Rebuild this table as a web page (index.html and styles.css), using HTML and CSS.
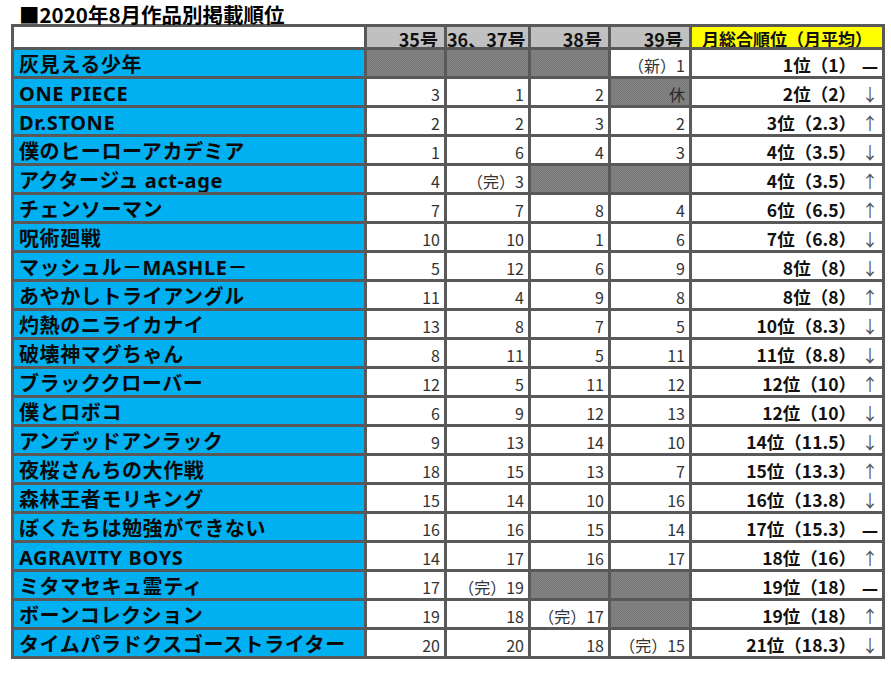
FILE: index.html
```html
<!DOCTYPE html>
<html lang="ja">
<head>
<meta charset="utf-8">
<title>2020年8月作品別掲載順位</title>
<link rel="stylesheet" href="styles.css">
</head>
<body>
<h1 class="title">■2020年8月作品別掲載順位</h1>
<table class="rank">
  <colgroup>
    <col class="c-name"><col class="c-35"><col class="c-36"><col class="c-38"><col class="c-39"><col class="c-tot">
  </colgroup>
  <thead>
    <tr>
      <th class="h-blank"><div class="h"></div></th>
      <th class="h-issue"><div class="h">35号</div></th>
      <th class="h-issue"><div class="h">36、37号</div></th>
      <th class="h-issue"><div class="h">38号</div></th>
      <th class="h-issue"><div class="h">39号</div></th>
      <th class="h-total"><div class="h">月総合順位（月平均）</div></th>
    </tr>
  </thead>
  <tbody>
    <tr><td class="name"><div class="c">灰見える少年</div></td><td class="na"><div class="c"></div></td><td class="na"><div class="c"></div></td><td class="na"><div class="c"></div></td><td class="num"><div class="c">（新）1</div></td><td class="tot"><div class="c"><span class="r">1位（1）</span><span class="m dash">—</span></div></td></tr>
    <tr><td class="name"><div class="c">ONE PIECE</div></td><td class="num"><div class="c">3</div></td><td class="num"><div class="c">1</div></td><td class="num"><div class="c">2</div></td><td class="na num"><div class="c">休</div></td><td class="tot"><div class="c"><span class="r">2位（2）</span><span class="m">↓</span></div></td></tr>
    <tr><td class="name"><div class="c">Dr.STONE</div></td><td class="num"><div class="c">2</div></td><td class="num"><div class="c">2</div></td><td class="num"><div class="c">3</div></td><td class="num"><div class="c">2</div></td><td class="tot"><div class="c"><span class="r">3位（2.3）</span><span class="m">↑</span></div></td></tr>
    <tr><td class="name"><div class="c">僕のヒーローアカデミア</div></td><td class="num"><div class="c">1</div></td><td class="num"><div class="c">6</div></td><td class="num"><div class="c">4</div></td><td class="num"><div class="c">3</div></td><td class="tot"><div class="c"><span class="r">4位（3.5）</span><span class="m">↓</span></div></td></tr>
    <tr><td class="name"><div class="c">アクタージュ act-age</div></td><td class="num"><div class="c">4</div></td><td class="num"><div class="c">（完）3</div></td><td class="na"><div class="c"></div></td><td class="na"><div class="c"></div></td><td class="tot"><div class="c"><span class="r">4位（3.5）</span><span class="m">↑</span></div></td></tr>
    <tr><td class="name"><div class="c">チェンソーマン</div></td><td class="num"><div class="c">7</div></td><td class="num"><div class="c">7</div></td><td class="num"><div class="c">8</div></td><td class="num"><div class="c">4</div></td><td class="tot"><div class="c"><span class="r">6位（6.5）</span><span class="m">↑</span></div></td></tr>
    <tr><td class="name"><div class="c">呪術廻戦</div></td><td class="num"><div class="c">10</div></td><td class="num"><div class="c">10</div></td><td class="num"><div class="c">1</div></td><td class="num"><div class="c">6</div></td><td class="tot"><div class="c"><span class="r">7位（6.8）</span><span class="m">↓</span></div></td></tr>
    <tr><td class="name"><div class="c">マッシュル－MASHLE－</div></td><td class="num"><div class="c">5</div></td><td class="num"><div class="c">12</div></td><td class="num"><div class="c">6</div></td><td class="num"><div class="c">9</div></td><td class="tot"><div class="c"><span class="r">8位（8）</span><span class="m">↓</span></div></td></tr>
    <tr><td class="name"><div class="c">あやかしトライアングル</div></td><td class="num"><div class="c">11</div></td><td class="num"><div class="c">4</div></td><td class="num"><div class="c">9</div></td><td class="num"><div class="c">8</div></td><td class="tot"><div class="c"><span class="r">8位（8）</span><span class="m">↑</span></div></td></tr>
    <tr><td class="name"><div class="c">灼熱のニライカナイ</div></td><td class="num"><div class="c">13</div></td><td class="num"><div class="c">8</div></td><td class="num"><div class="c">7</div></td><td class="num"><div class="c">5</div></td><td class="tot"><div class="c"><span class="r">10位（8.3）</span><span class="m">↓</span></div></td></tr>
    <tr><td class="name"><div class="c">破壊神マグちゃん</div></td><td class="num"><div class="c">8</div></td><td class="num"><div class="c">11</div></td><td class="num"><div class="c">5</div></td><td class="num"><div class="c">11</div></td><td class="tot"><div class="c"><span class="r">11位（8.8）</span><span class="m">↓</span></div></td></tr>
    <tr><td class="name"><div class="c">ブラッククローバー</div></td><td class="num"><div class="c">12</div></td><td class="num"><div class="c">5</div></td><td class="num"><div class="c">11</div></td><td class="num"><div class="c">12</div></td><td class="tot"><div class="c"><span class="r">12位（10）</span><span class="m">↑</span></div></td></tr>
    <tr><td class="name"><div class="c">僕とロボコ</div></td><td class="num"><div class="c">6</div></td><td class="num"><div class="c">9</div></td><td class="num"><div class="c">12</div></td><td class="num"><div class="c">13</div></td><td class="tot"><div class="c"><span class="r">12位（10）</span><span class="m">↓</span></div></td></tr>
    <tr><td class="name"><div class="c">アンデッドアンラック</div></td><td class="num"><div class="c">9</div></td><td class="num"><div class="c">13</div></td><td class="num"><div class="c">14</div></td><td class="num"><div class="c">10</div></td><td class="tot"><div class="c"><span class="r">14位（11.5）</span><span class="m">↓</span></div></td></tr>
    <tr><td class="name"><div class="c">夜桜さんちの大作戦</div></td><td class="num"><div class="c">18</div></td><td class="num"><div class="c">15</div></td><td class="num"><div class="c">13</div></td><td class="num"><div class="c">7</div></td><td class="tot"><div class="c"><span class="r">15位（13.3）</span><span class="m">↑</span></div></td></tr>
    <tr><td class="name"><div class="c">森林王者モリキング</div></td><td class="num"><div class="c">15</div></td><td class="num"><div class="c">14</div></td><td class="num"><div class="c">10</div></td><td class="num"><div class="c">16</div></td><td class="tot"><div class="c"><span class="r">16位（13.8）</span><span class="m">↓</span></div></td></tr>
    <tr><td class="name"><div class="c">ぼくたちは勉強ができない</div></td><td class="num"><div class="c">16</div></td><td class="num"><div class="c">16</div></td><td class="num"><div class="c">15</div></td><td class="num"><div class="c">14</div></td><td class="tot"><div class="c"><span class="r">17位（15.3）</span><span class="m dash">—</span></div></td></tr>
    <tr><td class="name"><div class="c">AGRAVITY BOYS</div></td><td class="num"><div class="c">14</div></td><td class="num"><div class="c">17</div></td><td class="num"><div class="c">16</div></td><td class="num"><div class="c">17</div></td><td class="tot"><div class="c"><span class="r">18位（16）</span><span class="m">↑</span></div></td></tr>
    <tr><td class="name"><div class="c">ミタマセキュ霊ティ</div></td><td class="num"><div class="c">17</div></td><td class="num"><div class="c">（完）19</div></td><td class="na"><div class="c"></div></td><td class="na"><div class="c"></div></td><td class="tot"><div class="c"><span class="r">19位（18）</span><span class="m dash">—</span></div></td></tr>
    <tr><td class="name"><div class="c">ボーンコレクション</div></td><td class="num"><div class="c">19</div></td><td class="num"><div class="c">18</div></td><td class="num"><div class="c">（完）17</div></td><td class="na"><div class="c"></div></td><td class="tot"><div class="c"><span class="r">19位（18）</span><span class="m">↑</span></div></td></tr>
    <tr><td class="name"><div class="c">タイムパラドクスゴーストライター</div></td><td class="num"><div class="c">20</div></td><td class="num"><div class="c">20</div></td><td class="num"><div class="c">18</div></td><td class="num"><div class="c">（完）15</div></td><td class="tot"><div class="c"><span class="r">21位（18.3）</span><span class="m">↓</span></div></td></tr>
  </tbody>
</table>
</body>
</html>
```

FILE: styles.css
```css
html, body {
  margin: 0;
  padding: 0;
  background: #ffffff;
}

body {
  font-family: "Noto Sans CJK JP", "Noto Sans", sans-serif;
  color: #111;
}

.title {
  margin: 0 0 0 19px;
  padding-top: 4px;
  height: 20px;
  line-height: 20px;
  font-size: 20.5px;
  font-weight: 700;
  color: #000;
  white-space: nowrap;
}

.rank {
  margin-left: 11px;
  width: 874px;
  table-layout: fixed;
  border-collapse: separate;
  border-spacing: 3px;
  background: #595959;
}

.c-name { width: 350px; }
.c-35 { width: 77px; }
.c-36 { width: 81px; }
.c-38 { width: 77px; }
.c-39 { width: 78px; }
.c-tot { width: 190px; }

.rank th, .rank td {
  padding: 0;
  vertical-align: top;
}

.h {
  height: 20px;
  overflow: hidden;
  line-height: 24px;
  font-size: 18px;
  font-weight: 700;
  color: #111;
  white-space: nowrap;
}

.h-blank { background: #ffffff; }

.h-issue { background: #c0c0c0; }
.h-issue .h {
  text-align: right;
  padding-right: 6px;
}

.h-total { background: #ffff00; }
.h-total .h {
  text-align: center;
  font-size: 17px;
}

.c {
  box-sizing: border-box;
  height: 26px;
  overflow: hidden;
  white-space: nowrap;
}

.name { background: #00b0f0; }
.name .c {
  font-family: "Noto Sans", "Noto Sans CJK JP", sans-serif;
  font-size: 20px;
  font-weight: 700;
  letter-spacing: 0.6px;
  color: #0a0a0a;
  line-height: 20px;
  padding: 5px 0 0 5px;
}

.num { background: #ffffff; }
.num .c {
  text-align: right;
  font-size: 16px;
  font-weight: 400;
  color: #333;
  line-height: 20px;
  padding: 5px 4px 0 0;
}

.na,
.na.num {
  background-color: #7f7f7f;
  background-image: conic-gradient(#858585 25%, #787878 0 50%, #858585 0 75%, #787878 0);
  background-size: 2px 2px;
}

.na.num .c { color: #2a2a2a; }

.tot { background: #ffffff; }
.tot .c {
  display: flex;
  justify-content: flex-end;
  align-items: flex-start;
  font-size: 17.5px;
  line-height: 20px;
  padding: 5px 1px 0 0;
}

.tot .r {
  font-weight: 700;
  color: #111;
}

.tot .m {
  width: 22px;
  margin-left: 3px;
  text-align: center;
  font-size: 17px;
  font-weight: 400;
  color: #555;
}

.tot .m.dash {
  font-weight: 900;
  font-size: 18px;
  color: #111;
}
```
